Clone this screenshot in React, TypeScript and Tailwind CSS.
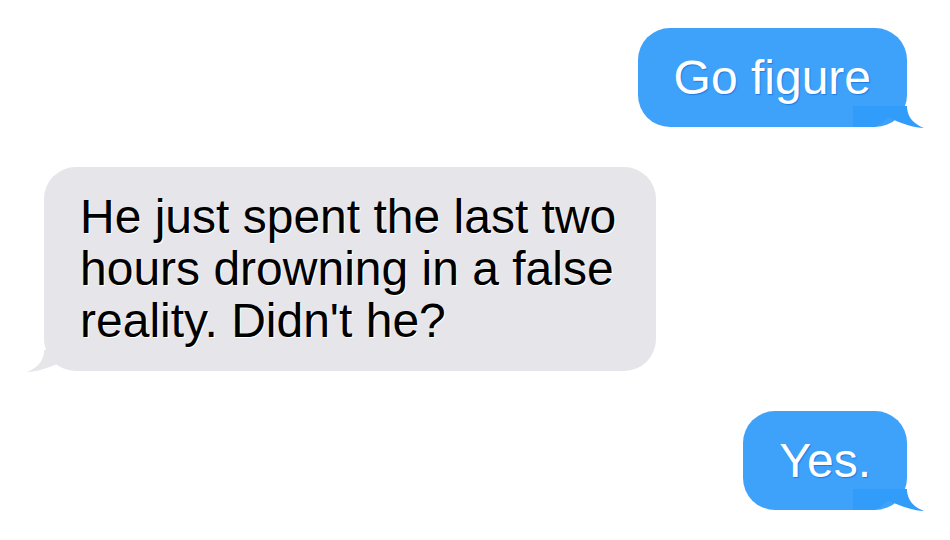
const TAIL = "M0,10 H54 V12 C55,22 61,28 71,32 C62,32 50,28 35,21.5 C30,26 26,30 20,31 H0 Z";

function Tail({ side, color }: { side: "left" | "right"; color: string }) {
  return (
    <svg
      width="72"
      height="34"
      viewBox="0 0 72 34"
      className={
        side === "right"
          ? "absolute -right-[18px] -bottom-[3px]"
          : "absolute -left-[18px] -bottom-[3px] -scale-x-100"
      }
    >
      <path d={TAIL} fill={color} />
    </svg>
  );
}

function Sent({ text }: { text: string }) {
  return (
    <div className="relative self-end rounded-[32px] bg-[#3ea1fa] px-9 pt-6 pb-[23px]">
      <Tail side="right" color="#329cfb" />
      <p className="relative text-[48px] leading-[52px] text-white [text-shadow:1px_1px_1px_rgba(0,95,205,0.55)]">
        {text}
      </p>
    </div>
  );
}

function Received({ text }: { text: string }) {
  return (
    <div className="relative w-[612px] self-start rounded-[32px] bg-[#e5e5ea] px-9 pt-6 pb-6">
      <Tail side="left" color="#e5e5ea" />
      <p className="relative text-[48px] leading-[52px] text-black [text-shadow:1px_1px_0_#ffffff]">
        {text}
      </p>
    </div>
  );
}

export default function App() {
  return (
    <div className="flex h-[540px] w-[950px] flex-col gap-10 bg-white pt-7 pr-[43px] pl-[44px] font-['Liberation_Sans',Arial,sans-serif]">
      <Sent text="Go figure" />
      <Received text="He just spent the last two hours drowning in a false reality. Didn't he?" />
      <Sent text="Yes." />
    </div>
  );
}
